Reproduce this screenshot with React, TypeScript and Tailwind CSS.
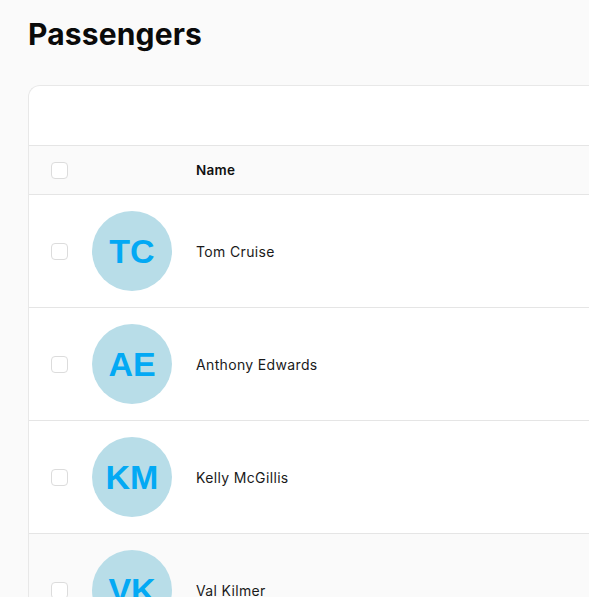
const passengers = [
  { initials: "TC", name: "Tom Cruise" },
  { initials: "AE", name: "Anthony Edwards" },
  { initials: "KM", name: "Kelly McGillis" },
  { initials: "VK", name: "Val Kilmer" },
];

function Checkbox() {
  return <span className="block h-[17px] w-[17px] rounded-[4px] border border-[#dcdcdc] bg-white" />;
}

export default function App() {
  return (
    <div
      className="h-[597px] overflow-hidden bg-[#fafafa] pl-[28px] text-[#111]"
      style={{ fontFamily: "Inter, 'Noto Sans', sans-serif" }}
    >
      <h1 className="pt-[16px] text-[30px] font-bold leading-[36px] tracking-[0.005em] text-[#0a0a0a]">
        Passengers
      </h1>
      <div className="mt-[33px] w-[700px] rounded-tl-[12px] border-l border-t border-[#e8e8e8] bg-white">
        <div className="h-[59px]" />
        <div className="flex h-[50px] items-center border-y border-[#e5e5e5] bg-[#fafafa]">
          <div className="w-[63px] pl-[22px]">
            <Checkbox />
          </div>
          <div className="w-[104px]" />
          <div className="text-[13.5px] font-semibold tracking-[0.02em]">Name</div>
        </div>
        {passengers.map((p, i) => (
          <div
            key={p.initials}
            className={`flex h-[113px] items-center border-b border-[#e5e5e5] ${i === 3 ? "bg-[#fafafa]" : "bg-white"}`}
          >
            <div className="w-[63px] pl-[22px]">
              <Checkbox />
            </div>
            <div
              className="flex h-[80px] w-[80px] items-center justify-center rounded-full bg-[#b8dde8] text-[34px] font-bold text-[#03a9f4]"
              style={{ fontFamily: "'Liberation Sans', Arial, sans-serif" }}
            >
              {p.initials}
            </div>
            <div className="ml-[24px] text-[14px] tracking-[0.025em] text-[#1a1a1a]">{p.name}</div>
          </div>
        ))}
      </div>
    </div>
  );
}
